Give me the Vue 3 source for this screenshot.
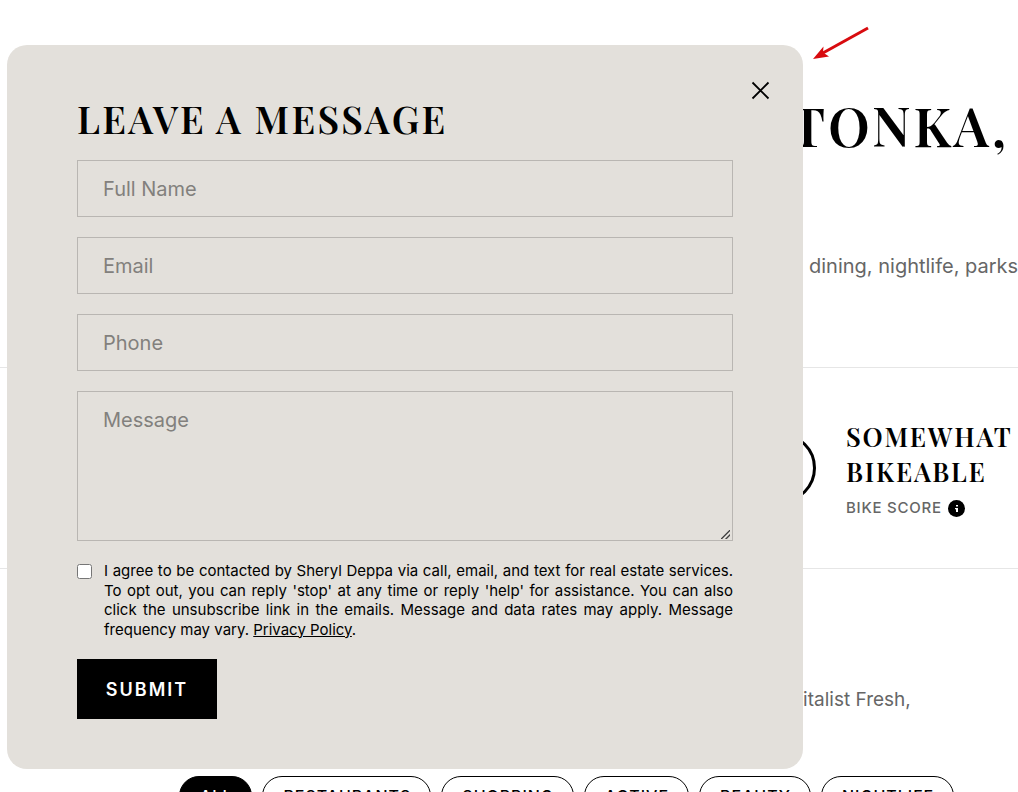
<script setup>
import { ref } from 'vue'

const fields = [
  { id: 'name', type: 'text', label: 'Full Name' },
  { id: 'email', type: 'email', label: 'Email' },
  { id: 'phone', type: 'tel', label: 'Phone' },
]
const categories = ['All', 'Restaurants', 'Shopping', 'Active', 'Beauty', 'Nightlife']
const active = ref('All')
</script>

<template>
  <div class="page">
    <main class="content">
      <h1 class="title">TONKA,</h1>
      <p class="intro">dining, nightlife, parks</p>
      <section class="score">
        <svg class="ring" viewBox="0 0 70 70" aria-hidden="true">
          <circle cx="35" cy="35" r="33.5" />
        </svg>
        <div>
          <h2 class="score-title">SOMEWHAT<br />BIKEABLE</h2>
          <p class="score-label">
            BIKE SCORE
            <svg class="info" viewBox="0 0 17 17" aria-hidden="true">
              <circle cx="8.5" cy="8.5" r="8.5" />
              <path d="M8 5h2v1.5H8zM7 8h3v4H8V9.2H7z" fill="#fff" />
            </svg>
          </p>
        </div>
      </section>
      <p class="places">Vitalist Fresh,</p>
      <nav class="pills">
        <button
          v-for="c in categories"
          :key="c"
          type="button"
          class="pill"
          :class="{ on: active === c }"
          @click="active = c"
        >{{ c }}</button>
      </nav>
    </main>

    <div class="modal" role="dialog" aria-labelledby="dialog-title">
      <button class="close" type="button" aria-label="Close">
        <svg viewBox="0 0 17 17" aria-hidden="true"><path d="M.5 .5l16 16M16.5 .5L.5 16.5" /></svg>
      </button>
      <h2 id="dialog-title" class="heading">LEAVE A MESSAGE</h2>
      <form class="form" @submit.prevent>
        <input
          v-for="f in fields"
          :key="f.id"
          :id="f.id"
          class="field"
          :type="f.type"
          :placeholder="f.label"
          :aria-label="f.label"
        />
        <textarea class="field area" placeholder="Message" aria-label="Message"></textarea>
        <div class="consent">
          <input id="agree" type="checkbox" class="check" />
          <label for="agree">I agree to be contacted by Sheryl Deppa via call, email, and text for real estate services. To opt out, you can reply 'stop' at any time or reply 'help' for assistance. You can also click the unsubscribe link in the emails. Message and data rates may apply. Message frequency may vary. <a href="#">Privacy Policy</a>.</label>
        </div>
        <button class="submit" type="submit">SUBMIT</button>
      </form>
    </div>

    <svg class="arrow" viewBox="0 0 60 36" aria-hidden="true">
      <path d="M57 2L11 27.5" stroke="#d80b0f" stroke-width="3" />
      <path d="M2 33L12.5 20.5L12 26.500L18 30.500Z" fill="#d80b0f" />
    </svg>
  </div>
</template>

<style>
body {
  margin: 0;
  background: #fff;
}
</style>

<style scoped>
.page {
  position: relative;
  height: 100vh;
  overflow: hidden;
  font-family: Inter, "Liberation Sans", sans-serif;
  color: #000;
}
.page *,
.page {
  box-sizing: border-box;
}
h1, h2, p {
  margin: 0;
}
.title,
.score-title,
.heading {
  font-family: "Playfair Display", "Liberation Serif", serif;
  font-weight: 600;
}
.content {
  padding-top: 90px;
  white-space: nowrap;
}
.title {
  padding-left: 790px;
  font-size: 54px;
  line-height: 70px;
  letter-spacing: 0.05em;
}
.intro {
  margin-top: 91px;
  padding-left: 809px;
  font-size: 20px;
  line-height: 30px;
  color: #666;
}
.score {
  display: flex;
  align-items: center;
  gap: 30px;
  margin-top: 86px;
  padding: 51px 0 48px 746px;
  border-top: 1px solid #e6e6e6;
  border-bottom: 1px solid #e6e6e6;
}
.ring {
  flex: none;
  width: 70px;
  height: 70px;
  margin-bottom: 3px;
  fill: none;
  stroke: #000;
  stroke-width: 3;
}
.score-title {
  font-size: 26px;
  line-height: 35px;
  letter-spacing: 0.07em;
}
.score-label {
  display: flex;
  align-items: center;
  gap: 6px;
  margin-top: 7px;
  font-size: 15px;
  font-weight: 500;
  line-height: 24px;
  letter-spacing: 0.05em;
  color: #666;
}
.info {
  width: 17px;
  height: 17px;
  fill: #000;
}
.places {
  margin-top: 116px;
  padding-left: 790px;
  font-size: 19px;
  line-height: 30px;
  color: #666;
}
.pills {
  display: flex;
  gap: 10px;
  margin-top: 61px;
  padding-left: 179px;
}
.pill {
  height: 40px;
  padding: 0 19px 0 20px;
  border: 1px solid #000;
  border-radius: 20px;
  background: #fff;
  color: #000;
  font: 500 16px Inter, sans-serif;
  letter-spacing: 1px;
  text-transform: uppercase;
}
.pill.on {
  background: #000;
  color: #fff;
}
.modal {
  position: absolute;
  top: 45px;
  left: 7px;
  width: calc(100% - 14px);
  max-width: 796px;
  padding: 50px 70px;
  border-radius: 20px;
  background: #e3e0db;
}
.close {
  position: absolute;
  top: 31px;
  right: 28px;
  display: grid;
  place-items: center;
  width: 29px;
  height: 29px;
  padding: 0;
  border: 0;
  background: none;
}
.close svg {
  width: 17px;
  height: 17px;
  fill: none;
  stroke: #000;
  stroke-width: 1.8;
  overflow: visible;
}
.heading {
  font-size: 38px;
  line-height: 48px;
  letter-spacing: 0.06em;
}
.form {
  display: flex;
  flex-direction: column;
  gap: 20px;
  margin-top: 17px;
}
.field {
  display: block;
  width: 100%;
  height: 57px;
  padding: 0 25px;
  border: 1px solid #b9b6b2;
  border-radius: 0;
  outline: 0;
  background: transparent;
  color: #000;
  font: 400 20px/30px Inter, sans-serif;
}
.field::placeholder {
  color: #82807d;
}
.area {
  height: 150px;
  padding: 13px 25px;
  resize: both;
}
.area::-webkit-resizer {
  background: linear-gradient(135deg, transparent 44%, #444 46% 55%, transparent 57% 71%, #444 73% 82%, transparent 84%) 4px 5px / 9px 9px no-repeat;
}
.consent {
  display: flex;
  align-items: flex-start;
  gap: 12px;
  font-size: 15px;
  line-height: 1.3;
  text-align: justify;
}
.check {
  flex: none;
  width: 15px;
  height: 15px;
  margin: 3px 0 0;
}
.consent a {
  color: inherit;
}
.submit {
  align-self: flex-start;
  width: 140px;
  height: 60px;
  padding: 0;
  border: 0;
  background: #000;
  color: #fff;
  font: 600 18px Inter, sans-serif;
  letter-spacing: 2px;
}
.arrow {
  position: absolute;
  top: 26px;
  left: 811px;
  width: 60px;
  height: 36px;
  fill: none;
}
</style>
